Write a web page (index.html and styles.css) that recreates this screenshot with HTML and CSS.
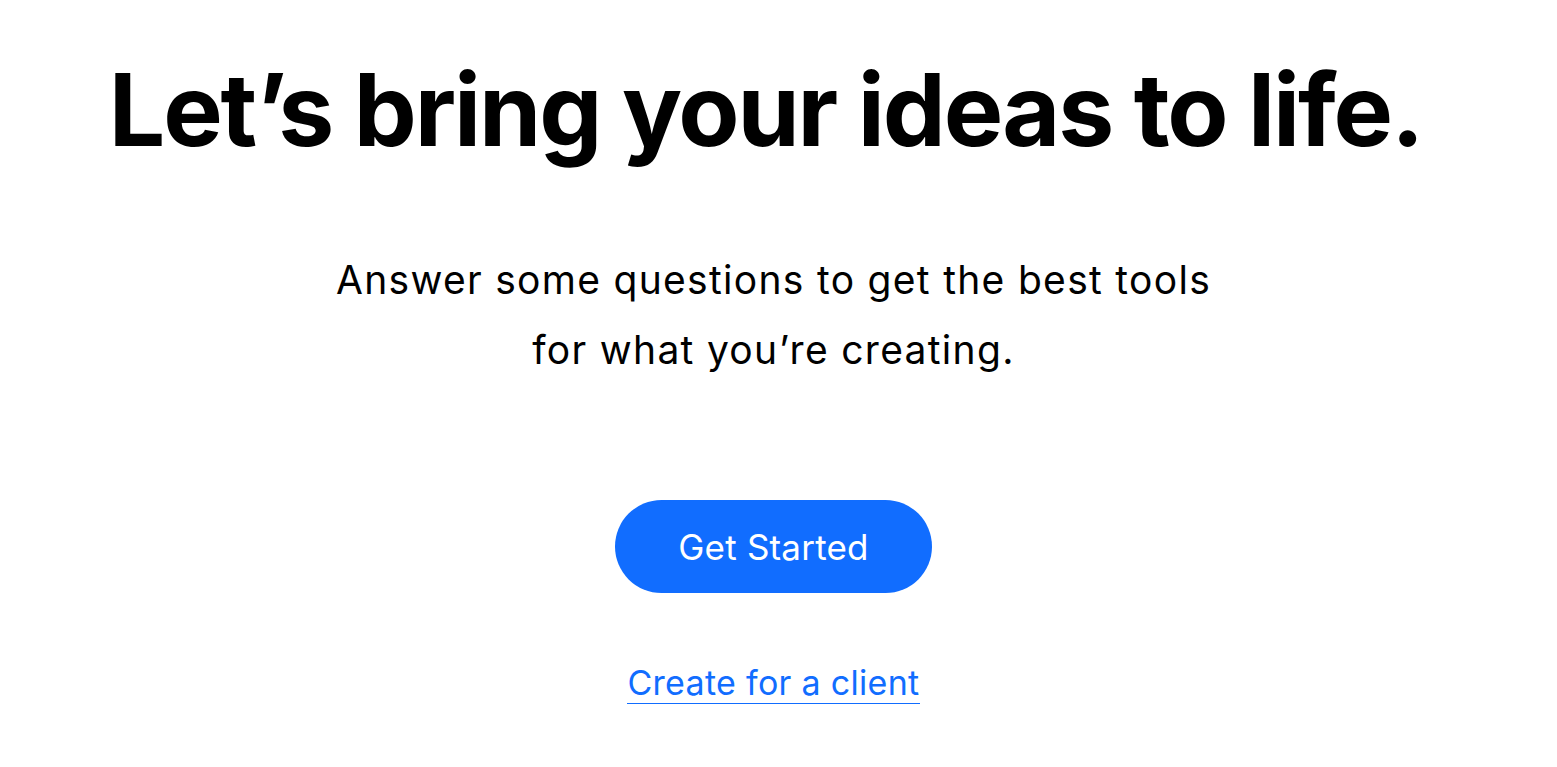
FILE: index.html
```html
<!DOCTYPE html>
<html lang="en">
<head>
<meta charset="utf-8">
<title>Let's bring your ideas to life</title>
<link rel="stylesheet" href="styles.css">
</head>
<body>
<main class="intro">
  <h1 class="intro__title">Let’s bring your ideas to life.</h1>
  <p class="intro__text">Answer some questions to get the best tools<br>for what you’re creating.</p>
  <button class="intro__cta" type="button">Get Started</button>
  <a class="intro__link" href="#">Create for a client</a>
</main>
</body>
</html>
```
FILE: styles.css
```css
* { box-sizing: border-box; }
html, body { margin: 0; padding: 0; background: #fff; }
body { font-family: "Inter", "Noto Sans", sans-serif; color: #000; }
.intro {
  display: flex;
  flex-direction: column;
  align-items: center;
  padding-top: 50px;
  padding-right: 10px;
}
.intro__title {
  margin: 0 16px 0 0;
  font-size: 100px;
  line-height: 120px;
  font-weight: 700;
  letter-spacing: -2.1px;
  white-space: nowrap;
}
.intro__text {
  margin: 75px 0 0;
  font-size: 39px;
  line-height: 70px;
  font-weight: 400;
  letter-spacing: 1.3px;
  text-align: center;
}
.intro__cta {
  margin-top: 115px;
  width: 317px;
  height: 93px;
  border: 0;
  border-radius: 47px;
  background: #116dff;
  color: #fff;
  font-family: inherit;
  font-size: 35px;
  font-weight: 400;
  letter-spacing: 0.2px;
  cursor: pointer;
}
.intro__link {
  margin-top: 70px;
  color: #116dff;
  font-size: 34px;
  letter-spacing: 0.3px;
  text-decoration: none;
  border-bottom: 1px solid #116dff;
  line-height: 40px;
}
```
